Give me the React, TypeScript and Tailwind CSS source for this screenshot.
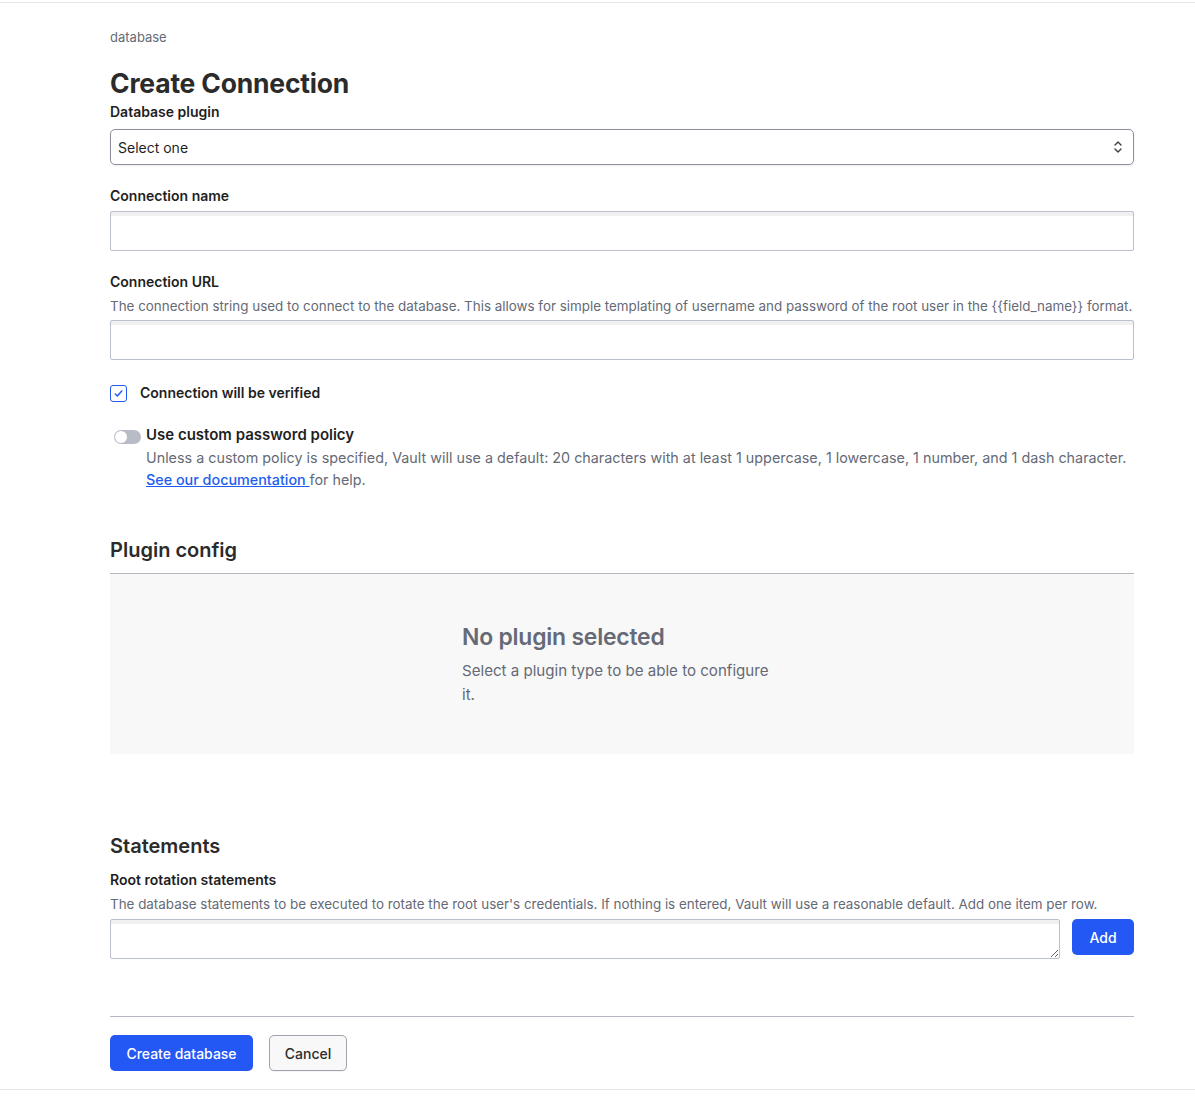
import React from 'react';

const Label: React.FC<{ children: React.ReactNode }> = ({ children }) => (
  <label className="block text-[14px] font-semibold text-[#1f1f1f] leading-5">{children}</label>
);

const Help: React.FC<{ children: React.ReactNode }> = ({ children }) => (
  <p className="text-[13.4px] text-[#656a76] leading-5 mt-[4px]">{children}</p>
);

const TextInput: React.FC<{ className?: string }> = ({ className = '' }) => (
  <input
    type="text"
    className={`block w-full h-[40px] border border-[#bac1cc] rounded-[2px] bg-white shadow-[inset_0_4px_0_0_#f0f0f0] px-2 text-[14px] outline-none ${className}`}
  />
);

export default function App() {
  return (
    <div className="min-h-screen bg-white pt-[2px] font-['Inter',sans-serif] text-[#1f1f1f]">
      <div className="border-t border-b border-[#e5e5e5] h-[1088px]">
        <div className="mx-[110px] w-[1024px]">
          <div className="pt-[24px] text-[13px] text-[#656a76] leading-5">database</div>

          <h1 className="mt-[20px] text-[26.5px] font-bold leading-8 text-[#2b2b2b] tracking-[-0.2px]">Create Connection</h1>

          <div className="mt-[3px]">
            <Label>Database plugin</Label>
            <div className="relative mt-[7px]">
              <select className="appearance-none block w-full h-[36px] border border-[#8c909c] rounded-[5px] bg-white px-[7px] text-[14px] text-[#1f1f1f] shadow-[0_1px_2px_rgba(0,0,0,0.08)] outline-none">
                <option>Select one</option>
              </select>
              <svg className="absolute right-[10px] top-[11px] w-[12px] h-[14px] pointer-events-none" viewBox="0 0 12 14" fill="none" stroke="#3b3d45" strokeWidth="1.4" strokeLinecap="round" strokeLinejoin="round">
                <path d="M3 5l3-3 3 3" />
                <path d="M3 9l3 3 3-3" />
              </svg>
            </div>
          </div>

          <div className="mt-[21px]">
            <Label>Connection name</Label>
            <div className="mt-[5px]">
              <TextInput />
            </div>
          </div>

          <div className="mt-[21px]">
            <Label>Connection URL</Label>
            <Help>
              The connection string used to connect to the database. This allows for simple templating of username and password of the root user in the {'{{field_name}}'} format.
            </Help>
            <div className="mt-[4px]">
              <TextInput />
            </div>
          </div>

          <div className="mt-[23px] flex items-center">
            <span className="w-[17px] h-[17px] border border-[#2458f5] rounded-[3px] flex items-center justify-center bg-white">
              <svg className="w-[11px] h-[11px]" viewBox="0 0 12 12" fill="none" stroke="#2458f5" strokeWidth="1.6" strokeLinecap="round" strokeLinejoin="round">
                <path d="M2.5 6.5l2.3 2.3L9.5 3.2" />
              </svg>
            </span>
            <span className="ml-[13px] text-[14px] font-semibold leading-5">Connection will be verified</span>
          </div>

          <div className="mt-[21px] flex">
            <span className="mt-[6px] ml-[4px] w-[27px] h-[14px] rounded-full bg-[#b8bcc6] relative shrink-0">
              <span className="absolute left-[1px] top-[1px] w-[12px] h-[12px] rounded-full bg-white" />
            </span>
            <div className="ml-[5px]">
              <div className="text-[15px] font-semibold leading-[22px]">Use custom password policy</div>
              <p className="text-[14.35px] text-[#656a76] leading-[22px] mt-[1px]">
                Unless a custom policy is specified, Vault will use a default: 20 characters with at least 1 uppercase, 1 lowercase, 1 number, and 1 dash character.
              </p>
              <p className="text-[14.35px] text-[#656a76] leading-[22px]">
                <a href="#" className="text-[#1d5ef0] underline font-medium">See our documentation </a>for help.
              </p>
            </div>
          </div>

          <h2 className="mt-[45px] text-[20px] font-semibold leading-7 text-[#2b2b2b]">Plugin config</h2>
          <div className="mt-[9px] border-t border-[#b4b7c0] bg-[#f8f8f8] h-[181px] flex justify-center">
            <div className="w-[320px] pt-[47px]">
              <div className="text-[22.9px] font-semibold text-[#656a76] leading-8 tracking-[-0.2px]">No plugin selected</div>
              <p className="mt-[6px] text-[15.1px] text-[#656a76] leading-6">Select a plugin type to be able to configure it.</p>
            </div>
          </div>

          <h2 className="mt-[78px] text-[20px] font-semibold leading-7 text-[#2b2b2b]">Statements</h2>
          <div className="mt-[10px]">
            <Label>Root rotation statements</Label>
            <Help>
              The database statements to be executed to rotate the root user's credentials. If nothing is entered, Vault will use a reasonable default. Add one item per row.
            </Help>
            <div className="mt-[5px] flex items-start gap-[12px]">
              <textarea className="block flex-1 h-[40px] border border-[#bac1cc] rounded-[2px] bg-white shadow-[inset_0_4px_0_0_#f0f0f0] px-2 text-[14px] outline-none" />
              <button className="w-[62px] h-[36px] rounded-[5px] bg-[#2458f5] text-white text-[14px] font-medium">Add</button>
            </div>
          </div>

          <div className="mt-[57px] border-t border-[#b4b7c0] pt-[18px] flex gap-[16px]">
            <button className="w-[143px] h-[36px] rounded-[5px] bg-[#2458f5] text-white text-[14px] font-medium">Create database</button>
            <button className="w-[78px] h-[36px] rounded-[5px] border border-[#a0a3ab] bg-[#f8f8f8] text-[#2b2b2b] text-[14px] font-medium shadow-[0_1px_1px_rgba(0,0,0,0.05)]">Cancel</button>
          </div>
        </div>
      </div>
    </div>
  );
}
